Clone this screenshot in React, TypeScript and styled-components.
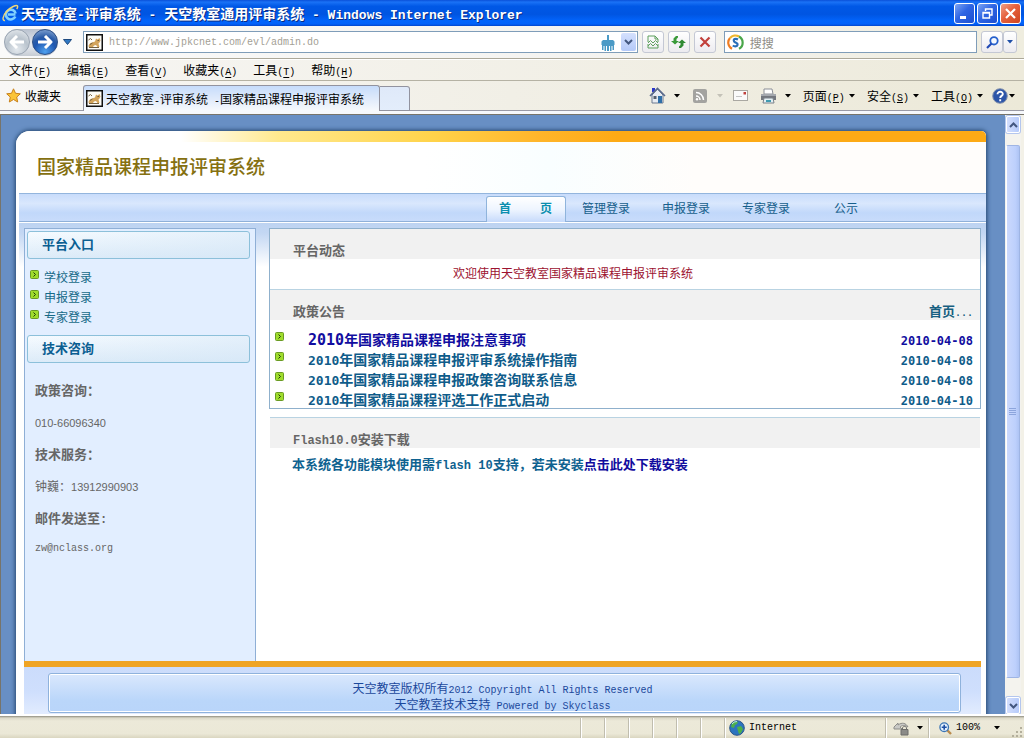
import React from "react";
import styled, { createGlobalStyle, css } from "styled-components";

const GlobalStyle = createGlobalStyle`
  * { box-sizing: border-box; }
  html, body { margin: 0; padding: 0; }
  body {
    font-family: "Noto Sans CJK SC", sans-serif;
    font-size: 12px;
    line-height: 16px;
    color: #000;
    background: #ece9d8;
  }
  button, input { font: inherit; color: inherit; padding: 0; margin: 0; border: 0; background: none; }
  a { color: inherit; text-decoration: none; }
  h1, h2, p, ul { margin: 0; padding: 0; font-size: inherit; font-weight: inherit; }
  ul { list-style: none; }
`;

/* ---------- mixed Chinese / Latin text ---------- */

const Latin = styled.span<{ $size: number; $face: string }>`
  font-family: "${(p) => p.$face}", monospace;
  font-size: ${(p) => p.$size}px;
  line-height: 1;
  white-space: pre;
`;

type MixProps = { children: string; size?: number; face?: string };

function Mix({ children, size = 10, face = "Liberation Mono" }: MixProps) {
  const parts = children.split(/([\x20-\x7e]+)/).filter(Boolean);
  return (
    <>
      {parts.map((part, i) =>
        /^[\x20-\x7e]/.test(part) ? (
          <Latin key={i} $size={size} $face={face}>
            {part}
          </Latin>
        ) : (
          part
        )
      )}
    </>
  );
}

/* ---------- window frame ---------- */

const Window = styled.div`
  display: flex;
  flex-direction: column;
  height: 100vh;
  overflow: hidden;
  white-space: nowrap;
`;

const TitleBar = styled.header`
  display: flex;
  align-items: center;
  flex: none;
  height: 26px;
  padding: 0 3px 0 2px;
  gap: 2px;
  background: linear-gradient(#0a50d8 0, #1a72f6 8%, #0058e6 24%, #0055e2 55%, #0264fb 80%, #0262fa 92%, #0346cc 100%);
  color: #fff;
  font-weight: bold;
  font-size: 14px;
  text-shadow: 1px 1px 0 #0a2a80;
`;

const WindowTitle = styled.h1`
  flex: 1;
  font-size: 14px;
  line-height: 24px;
  font-weight: bold;
`;

const CaptionButton = styled.button<{ $close?: boolean }>`
  display: grid;
  place-items: center;
  width: 21px;
  height: 21px;
  border: 1px solid #fff;
  border-radius: 3px;
  background: ${(p) =>
    p.$close
      ? "linear-gradient(135deg, #f0a088, #e5603c 45%, #cf4420)"
      : "linear-gradient(135deg, #7ba4f4, #2f66e4 45%, #1c4fd0)"};
`;

const AddressRow = styled.div`
  display: flex;
  align-items: center;
  flex: none;
  height: 33px;
  padding: 0 7px 0 4px;
  background: linear-gradient(90deg, #fafafa 0, #f4f3f0 60%, #efeddf 100%);
  border-bottom: 1px solid #aca899;
`;

const NavPair = styled.div`
  display: flex;
  align-items: center;
  height: 27px;
  gap: 2px;
  border-radius: 14px;
  background: linear-gradient(#b9c2cf, #e8ebf0 60%, #c6ccd4);
`;

const RoundButton = styled.button<{ $active?: boolean }>`
  display: grid;
  place-items: center;
  width: 26px;
  height: 26px;
  border-radius: 13px;
  border: 1px solid ${(p) => (p.$active ? "#2b4e86" : "#98a3b1")};
  background: ${(p) =>
    p.$active
      ? "radial-gradient(circle at 50% 90%, #4fa0ee, #1f57b0 45%, #2a5ca8 60%, #9bb8de)"
      : "radial-gradient(circle at 50% 80%, #e4e9ee, #b9c3cd 50%, #eef1f4)"};
`;

const PlainButton = styled.button`
  display: grid;
  place-items: center;
`;

const HistoryButton = styled(PlainButton)`
  width: 12px;
  margin: 0 10px 0 3px;
`;

const Field = styled.label<{ $grow?: boolean }>`
  display: flex;
  align-items: center;
  ${(p) => (p.$grow ? css`flex: 1;` : css`flex: 0 0 25%;`)}
  height: 22px;
  padding: 0 1px 0 2px;
  gap: 6px;
  border: 1px solid #7f9db9;
  background: #fff;
  color: #a3a095;
`;

const FieldInput = styled.input<{ $mono?: boolean }>`
  flex: 1;
  min-width: 0;
  height: 18px;
  outline: 0;
  ${(p) => p.$mono && css`font-family: "Liberation Mono", monospace; font-size: 10px;`}
  &::placeholder { color: #8f8d86; opacity: 1; }
`;

const DropButton = styled(PlainButton)`
  width: 15px;
  height: 18px;
  border-radius: 2px;
  background: linear-gradient(#d4e0fd, #b4c9f8);
`;

const ToolButtons = styled.div`
  display: flex;
  gap: 4px;
  margin: 0 8px 0 4px;
`;

const ToolButton = styled.button<{ $narrow?: boolean }>`
  display: grid;
  place-items: center;
  width: ${(p) => (p.$narrow ? 14 : 22)}px;
  height: 22px;
  border: 1px solid #c4c8d4;
  border-radius: 3px;
  background: linear-gradient(#fff, #ecebf0);
`;

const SearchButtons = styled.div`
  display: flex;
  margin-left: 4px;
`;

const MenuBar = styled.nav`
  display: flex;
  align-items: center;
  flex: none;
  height: 22px;
  gap: 16px;
  padding: 0 9px;
  background: linear-gradient(90deg, #f7f6f4, #edeadb);
  border-top: 1px solid #fff;
  border-bottom: 1px solid #b5b2a4;
`;

const MenuButton = styled.button`
  u { text-underline-offset: 2px; }
`;

const TabStrip = styled.div`
  display: flex;
  flex: none;
  height: 30px;
  background: linear-gradient(90deg, #f8f7f5, #f1efe6 50%, #ece9d8);
`;

const FavoritesButton = styled.button`
  display: flex;
  align-items: center;
  width: 83px;
  gap: 4px;
  padding: 0 0 0 6px;
  border-bottom: 1px solid #9a9aa6;
`;

const Tab = styled.button`
  display: flex;
  align-items: center;
  gap: 3px;
  width: 297px;
  margin-top: 4px;
  padding: 0 0 0 2px;
  border: 1px solid #92939f;
  border-bottom: 0;
  border-radius: 3px 3px 0 0;
  background: linear-gradient(#c6dcfb, #dfeafb 50%, #f7f9fc);
`;

const NewTab = styled.button`
  width: 30px;
  margin-top: 5px;
  border: 1px solid #92939f;
  border-left: 0;
  border-radius: 0 3px 0 0;
  background: linear-gradient(#dfe9f9, #e3edfb);
`;

const CommandBar = styled.div`
  display: flex;
  flex: 1;
  align-items: center;
  justify-content: flex-end;
  padding: 0 9px 0 0;
  border-bottom: 1px solid #9a9aa6;
`;

const Command = styled.button<{ $gap: number; $inner?: number }>`
  display: flex;
  align-items: center;
  gap: ${(p) => p.$inner ?? 4}px;
  margin-left: ${(p) => p.$gap}px;
`;

const TabShelf = styled.div`
  flex: none;
  height: 4px;
  background: #f6f8fb;
  border-bottom: 1px solid #77746a;
`;

/* ---------- web page ---------- */

const Viewport = styled.div`
  display: flex;
  flex: 1;
  min-height: 0;
  border-left: 1px solid #77746a;
  border-right: 3px solid #f3f1e8;
`;

const Canvas = styled.div`
  flex: 1;
  min-width: 0;
  overflow: hidden;
  padding: 16px 19px 0 15px;
  background: #688fc4;
`;

const Sheet = styled.div`
  padding-left: 3px;
  border-radius: 14px 5px 0 0;
  background: #fff;
  box-shadow: 0 0 4px 1px #24466f;
  overflow: hidden;
`;

const Banner = styled.div`
  margin-left: -3px;
  padding: 23px 21px 16px;
  background:
    linear-gradient(90deg, transparent 17%, #ffe98e 27%, #ffd34a 43%, #ffb52a 54%, #fdaa15 62%) 0 0 / 100% 11px no-repeat,
    linear-gradient(90deg, #fff 42%, #f9feff 55%, #fffdfb 70%);
`;

const SiteTitle = styled.h2`
  font-size: 19px;
  line-height: 23px;
  font-weight: 500;
  color: #857010;
`;

const SiteNav = styled.nav`
  display: flex;
  height: 29px;
  padding-left: 467px;
  border-top: 1px solid #93b5dd;
  border-bottom: 1px solid #8fb0d8;
  background: linear-gradient(#c8dcfb, #d9e7fd 35%, #c1d8fa 70%, #c8dcfb);
`;

const NavLink = styled.a<{ $active?: boolean }>`
  display: block;
  width: 80px;
  text-align: center;
  line-height: 24px;
  padding-top: 2px;
  color: #175f8c;
  ${(p) =>
    p.$active &&
    css`
      display: flex;
      justify-content: space-between;
      margin-top: 2px;
      margin-bottom: -1px;
      padding: 0 13px 0 12px;
      line-height: 22px;
      font-weight: bold;
      color: #0c8fae;
      border: 1px solid #8fb4dc;
      border-bottom: 0;
      border-radius: 3px 3px 0 0;
      background: linear-gradient(#fff, #eef5ff 50%, #c6dafb);
    `}
`;

const Columns = styled.div`
  display: flex;
  align-items: flex-start;
  gap: 13px;
  padding: 5px 5px 0;
  border-top: 1px solid #fff;
  background: linear-gradient(#bdd3f1 0, #c3d7f3 10px, #fff 44px);
`;

const Sidebar = styled.aside`
  flex: none;
  width: 232px;
  height: 433px;
  padding: 2px;
  border: 1px solid #8fafd6;
  border-bottom: 0;
  background: #e2eeff;
`;

const SideHeading = styled.h2`
  width: 223px;
  height: 28px;
  padding-left: 14px;
  border: 1px solid #8cc0da;
  border-radius: 3px;
  background: linear-gradient(90deg, #ffffff00, #d4e6f788), linear-gradient(#f6fbff, #dcebf8);
  font-size: 13px;
  line-height: 24px;
  font-weight: bold;
  color: #0b5f92;
`;

const EntryList = styled.ul`
  padding: 8px 0 8px 3px;
`;

const Entry = styled.li`
  display: flex;
  align-items: flex-start;
  gap: 5px;
  height: 20px;
  line-height: 20px;
  color: #176a88;
  svg { margin-top: 3px; }
`;

const Contact = styled.div`
  padding: 11px 8px;
  line-height: 32px;
  color: #666;
  p:last-child { line-height: 24px; }
`;

const ContactLabel = styled.p`
  font-size: 13px;
  font-weight: bold;
`;

const Main = styled.main`
  flex: 1;
  min-width: 0;
  background: #fff;
`;

const Panel = styled.section`
  border: 1px solid #8fb0cc;
  margin-bottom: 8px;
`;

const PanelHead = styled.div<{ $line?: boolean }>`
  display: flex;
  justify-content: space-between;
  height: 30px;
  padding: 12px 7px 0 23px;
  ${(p) => p.$line && css`border-top: 1px solid #b9d3e2; height: 31px;`}
  background: #f1f1f1;
  font-size: 13px;
  line-height: 18px;
  font-weight: bold;
  color: #666;
  a { color: #175f80; }
`;

const Welcome = styled.p`
  padding: 6px 104px 8px 0;
  text-align: center;
  color: #9c1230;
`;

const NoticeTable = styled.table`
  width: 100%;
  margin-top: 10px;
  border-collapse: collapse;
  font-weight: bold;
  color: #0f5c8a;
  td { height: 20px; padding: 0; font-size: 14px; line-height: 18px; vertical-align: top; }
  td:first-child { width: 38px; padding: 2px 0 0 5px; line-height: 0; }
  td:last-child { padding-right: 7px; text-align: right; }
  tr:first-child { color: #110da0; }
  tr:last-child td { height: 18px; }
`;

const Download = styled.section`
  margin: 0 1px;
`;

const DownloadText = styled.p`
  padding: 7px 0 0 22px;
  font-size: 13px;
  line-height: 18px;
  font-weight: bold;
  color: #0f6290;
  a { color: #100c9e; }
`;

const Footer = styled.footer`
  margin: 0 5px;
  padding: 6px 20px 16px 24px;
  border-top: 6px solid #efa424;
  background: linear-gradient(#cbdcfb, #cfdffd 40%, #eef4ff 100%);
`;

const FooterBox = styled.div`
  height: 40px;
  padding: 6px 0 0;
  border: 1px solid #8fb2dc;
  border-radius: 3px;
  box-shadow: inset 0 0 0 1px #fff;
  background: linear-gradient(#dae8fd, #bad6fa 70%, #b9d5fa);
  text-align: center;
  color: #1b489c;
`;

const FooterLine = styled.p`
  line-height: 16px;
  padding-right: 4px;
`;

/* ---------- scroll bar and status bar ---------- */

const ScrollBar = styled.div`
  display: flex;
  flex-direction: column;
  flex: none;
  width: 16px;
  padding: 1px 1px 0;
  background: #f4f3ee;
`;

const ScrollButton = styled.button`
  display: grid;
  place-items: center;
  flex: none;
  height: 17px;
  border: 1px solid #fff;
  border-radius: 2px;
  background: linear-gradient(90deg, #d3defd, #b6cbfa);
  box-shadow: 0 0 0 1px #b4c6ee;
`;

const ScrollTrack = styled.div`
  display: flex;
  flex: 1;
  padding: 12px 0 19px;
`;

const ScrollThumb = styled.div`
  display: grid;
  place-items: center;
  flex: 1;
  border: 1px solid #9fb5e4;
  border-left-color: #fff;
  border-radius: 2px;
  background: linear-gradient(90deg, #cbd9fd, #bdd0fc 70%, #aec4f4);
`;

const StatusBar = styled.footer`
  display: flex;
  flex: none;
  height: 24px;
  padding-top: 2px;
  justify-content: flex-end;
  border-top: 2px solid #fff;
  background: linear-gradient(#8f8d80 0, #dcd9c8 2px, #ece9d9 5px, #ebe8d7 80%, #dad6c0);
`;

const StatusCell = styled.div<{ $width: number }>`
  display: flex;
  align-items: center;
  width: ${(p) => p.$width}px;
  padding-left: 4px;
  gap: 4px;
  border-left: 1px solid #c0bdae;
  box-shadow: inset 1px 0 0 #fff;
`;

const StatusButton = styled.button<{ $gap: number; $pad: number }>`
  display: flex;
  align-items: center;
  gap: ${(p) => p.$gap}px;
  padding-left: ${(p) => p.$pad}px;
`;

const Grip = styled.svg`
  margin-left: auto;
  align-self: flex-end;
`;

/* ---------- icons ---------- */

const Caret = ({ color = "#000" }: { color?: string }) => (
  <svg width="6" height="4" viewBox="0 0 6 4">
    <path d="M0 0h6L3 3.4z" fill={color} />
  </svg>
);

const Chevron = ({ up }: { up?: boolean }) => (
  <svg width="9" height="6" viewBox="0 0 9 6">
    <path d={up ? "M1 5l3.500-3.500L8 5" : "M1 1l3.500 3.500L8 1"} fill="none" stroke="#43577f" strokeWidth="2" />
  </svg>
);

const IeLogo = () => (
  <svg width="17" height="18" viewBox="0 0 17 18">
    <path d="M13.500 10.500H6M13.300 12.500A4.900 4.900 0 1 1 13.600 9.500" fill="none" stroke="#7fd0ff" strokeWidth="2.600" />
    <path d="M3 16.500C0 17 .5 12 4.500 7.500S14.500.5 15.500 2c.5 1-.2 2.200-.8 3" fill="none" stroke="#f0d878" strokeWidth="1.400" />
  </svg>
);

const Arrow = ({ left }: { left?: boolean }) => (
  <svg width="16" height="14" viewBox="0 0 16 14">
    <path
      d={left ? "M8 1L2 7l6 6M2.500 7H15" : "M8 1l6 6-6 6M13.500 7H1"}
      fill="none"
      stroke="#fff"
      strokeWidth="3"
      strokeLinejoin="round"
    />
  </svg>
);

const SiteIcon = () => (
  <svg width="17" height="17" viewBox="0 0 17 17">
    <rect x=".75" y=".75" width="15.500" height="15.500" fill="#fdfcf7" stroke="#111" strokeWidth="1.500" />
    <path d="M2.500 12.500c0-2 1.500-3.500 3.500-4l3-1 1-3 1.500 1L13.500 4l1 2.500-1 2-1 1 1 3.500h-2l-1.500-2-2 .5L7 13H3z" fill="#d3a45c" />
    <path d="M2.500 6l2-1.500L6 6M4 10.500L6.500 9M11.500 6.500h1.500M3 13.500h10" fill="none" stroke="#75603f" />
  </svg>
);

const BrushIcon = () => (
  <svg width="14" height="17" viewBox="0 0 14 17">
    <path d="M6 1h2v5h4l1.500 1.500V11H13v5h-1.500v-4h-1v5H9v-5H8v5H6v-5H5v5H3.500v-5h-1v4H1v-5H.5V7.500L2 6h4z" fill="#4b9ac6" />
  </svg>
);

const PageIcon = () => (
  <svg width="12" height="14" viewBox="0 0 12 14">
    <path d="M1 7V1h7l3 3v3M1 9v4h10V9M8 1v3h3" fill="none" stroke="#5ea05e" />
    <path d="M1 8l2.500-2.500L6 8l2.500-2.500L11 8M1 11l2.500-2.500L6 11l2.500-2.500L11 11" fill="none" stroke="#5ea05e" />
  </svg>
);

const RefreshIcon = () => (
  <svg width="15" height="14" viewBox="0 0 15 14">
    <path d="M7 1v1.500L5.500 4v2H8L4 9.500 0 6h2.500V3.500L5 1z" fill="#3a9a3a" />
    <path d="M8 13v-1.500L9.500 10V8H7l4-3.500L15 8h-2.500v2.500L10 13z" fill="#2f8a34" />
  </svg>
);

const StopIcon = () => (
  <svg width="12" height="12" viewBox="0 0 12 12">
    <path d="M1.500 1.500l9 9M10.500 1.500l-9 9" stroke="#c2403c" strokeWidth="2.200" />
  </svg>
);

const SosoIcon = () => (
  <svg width="17" height="17" viewBox="0 0 17 17">
    <path d="M5 14.800A7 7 0 0 1 3 4" fill="none" stroke="#ef7d22" strokeWidth="2.200" />
    <path d="M3 4a7 7 0 0 1 9-1.500" fill="none" stroke="#f0b62c" strokeWidth="2.200" />
    <path d="M12 2.500a7 7 0 0 1 0 12.300" fill="none" stroke="#4aa64a" strokeWidth="2.200" />
    <path d="M11 5.500C8.500 4 6 5.200 7 7.200s4 1.200 3.600 3.500S7 12.500 5.800 11.500" fill="none" stroke="#2a6fb8" strokeWidth="2.200" />
  </svg>
);

const SearchIcon = () => (
  <svg width="13" height="13" viewBox="0 0 13 13">
    <circle cx="8" cy="4.800" r="3.700" fill="#f4f9ff" stroke="#2660cc" strokeWidth="1.800" />
    <path d="M5.500 7.500L1 12" stroke="#2048b4" strokeWidth="2.200" />
  </svg>
);

const StarIcon = () => (
  <svg width="15" height="15" viewBox="0 0 15 15">
    <path d="M7.500.8l2 4.500 4.800.5-3.600 3.300 1 4.900-4.200-2.500L3.300 14l1-4.900L.7 5.800l4.800-.5z" fill="#fbc437" stroke="#c8811c" />
  </svg>
);

const HomeIcon = () => (
  <svg width="17" height="17" viewBox="0 0 17 17">
    <path d="M3 1h3v4H3z" fill="#2b36c8" />
    <path d="M3 8l5.500-6L14 8v8H3z" fill="#e8ecf2" stroke="#6d7a90" />
    <path d="M1 9l7.500-7.500L16 9" fill="none" stroke="#5b6b8c" strokeWidth="1.600" />
    <path d="M9 9h4v7H9z" fill="#2f6fa8" />
    <path d="M4.500 9h3v3h-3z" fill="#555f6e" />
  </svg>
);

const RssIcon = () => (
  <svg width="14" height="14" viewBox="0 0 14 14">
    <rect width="14" height="14" rx="2" fill="#a3a3a0" />
    <path d="M3 7a4 4 0 0 1 4 4M3 3.500A7.500 7.500 0 0 1 10.500 11" fill="none" stroke="#fff" strokeWidth="1.500" />
    <circle cx="4" cy="10.200" r="1.200" fill="#fff" />
  </svg>
);

const MailIcon = () => (
  <svg width="15" height="11" viewBox="0 0 15 11">
    <rect x=".5" y=".5" width="14" height="10" fill="#fafafa" stroke="#aaa8a2" />
    <path d="M10.500 2h2.500v2.500h-2.500z" fill="#c0403c" />
    <path d="M3 6.500h6" stroke="#c4c4c4" />
  </svg>
);

const PrinterIcon = () => (
  <svg width="17" height="16" viewBox="0 0 17 16">
    <path d="M4 1h8l1 5H4z" fill="#fff" stroke="#8b8f96" />
    <path d="M1 6h15v6H1z" fill="#73777e" />
    <path d="M1 6h15v2H1z" fill="#a4a8ae" />
    <path d="M4 10h9l1 5H3z" fill="#e4f0f4" stroke="#7d828a" />
    <path d="M6 12h5v2H6z" fill="#3f9ab0" />
  </svg>
);

const HelpIcon = () => (
  <svg width="16" height="16" viewBox="0 0 16 16">
    <circle cx="8" cy="8" r="7.300" fill="#2c55a8" stroke="#8794ac" />
    <path d="M5.500 6.300C5.500 2.800 11 3 10.800 6.200 10.600 8 8.200 7.800 8.200 10M8.200 11.200v2" fill="none" stroke="#fff" strokeWidth="1.900" />
  </svg>
);

const Bullet = () => (
  <svg width="9" height="9" viewBox="0 0 9 9">
    <rect x=".5" y=".5" width="8" height="8" rx="1" fill="#9fdc2c" stroke="#6a9a24" />
    <path d="M3.500 2.500l2 2-2 2" fill="none" stroke="#1d3a08" />
  </svg>
);

const GlobeIcon = () => (
  <svg width="16" height="16" viewBox="0 0 16 16">
    <circle cx="8" cy="8" r="7.300" fill="#2c74bf" stroke="#2a5588" />
    <path d="M3 3c2-2 5-2 6-1L8 4 6 5 5 8 2 7zM8 7l4-1 2 3-2 4-2 1-1-3z" fill="#4fb04a" />
    <path d="M3 4a6 6 0 0 1 5-2.500" fill="none" stroke="#b9e4f6" />
  </svg>
);

const LockIcon = () => (
  <svg width="18" height="16" viewBox="0 0 18 16">
    <path d="M1 7l4-4v2c4-3 8-2 10 2-3-2-6-2-8 0l2 2H1z" fill="#c9c9c6" stroke="#8d8d8a" />
    <path d="M8 9.500h7V15H8z" fill="#8b8b88" stroke="#6c6c6a" />
    <path d="M9.500 9.500V8c0-2 4-2 4 0v1.500" fill="none" stroke="#6c6c6a" />
  </svg>
);

const ZoomIcon = () => (
  <svg width="13" height="13" viewBox="0 0 13 13">
    <path d="M8 8l4 4" stroke="#b98a4c" strokeWidth="2.400" />
    <circle cx="5.200" cy="5.200" r="4.300" fill="#e4f1fd" stroke="#3a74b4" strokeWidth="1.300" />
    <path d="M5.200 2.700v5M2.700 5.200h5" stroke="#1f50a4" strokeWidth="1.600" />
  </svg>
);

/* ---------- data ---------- */

const menus: [string, string][] = [
  ["文件", "F"],
  ["编辑", "E"],
  ["查看", "V"],
  ["收藏夹", "A"],
  ["工具", "T"],
  ["帮助", "H"],
];

const commands: [string, string, number][] = [
  ["页面", "P", 12],
  ["安全", "S", 12],
  ["工具", "O", 12],
];

const entries = ["学校登录", "申报登录", "专家登录"];

const notices = [
  { title: "2010年国家精品课程申报注意事项", date: "2010-04-08", size: 15 },
  { title: "2010年国家精品课程申报评审系统操作指南", date: "2010-04-08", size: 13 },
  { title: "2010年国家精品课程申报政策咨询联系信息", date: "2010-04-08", size: 13 },
  { title: "2010年国家精品课程评选工作正式启动", date: "2010-04-10", size: 13 },
];

const AccessLabel = ({ text, letter }: { text: string; letter: string }) => (
  <span>
    {text}
    <Latin $size={10} $face="Liberation Mono">
      (<u>{letter}</u>)
    </Latin>
  </span>
);

export default function App() {
  return (
    <Window>
      <GlobalStyle />
      <TitleBar>
        <IeLogo />
        <WindowTitle>
          <Mix size={13}>天空教室-评审系统 - 天空教室通用评审系统 - Windows Internet Explorer</Mix>
        </WindowTitle>
        <CaptionButton aria-label="最小化">
          <svg width="13" height="13" viewBox="0 0 13 13">
            <path d="M2 9h6v3H2z" fill="#fff" />
          </svg>
        </CaptionButton>
        <CaptionButton aria-label="还原">
          <svg width="13" height="13" viewBox="0 0 13 13">
            <path d="M4.500 4V2H11v6H9M4 2h7.500M2 5.500h6.500V11H2zM2 6h6.500" fill="none" stroke="#fff" strokeWidth="1.400" />
          </svg>
        </CaptionButton>
        <CaptionButton $close aria-label="关闭">
          <svg width="13" height="13" viewBox="0 0 13 13">
            <path d="M2 2l9 9M11 2l-9 9" stroke="#fff" strokeWidth="2.200" />
          </svg>
        </CaptionButton>
      </TitleBar>

      <AddressRow>
        <NavPair>
          <RoundButton aria-label="后退">
            <Arrow left />
          </RoundButton>
          <RoundButton $active aria-label="前进">
            <Arrow />
          </RoundButton>
        </NavPair>
        <HistoryButton aria-label="历史">
          <svg width="9" height="6" viewBox="0 0 9 6">
            <path d="M.5.5h8L4.500 5.500z" fill="#2f78c4" stroke="#1f4a80" />
          </svg>
        </HistoryButton>
        <Field $grow>
          <SiteIcon />
          <FieldInput $mono aria-label="地址" defaultValue="http://www.jpkcnet.com/evl/admin.do" />
          <BrushIcon />
          <DropButton aria-label="展开地址">
            <Chevron />
          </DropButton>
        </Field>
        <ToolButtons>
          <ToolButton aria-label="兼容性视图">
            <PageIcon />
          </ToolButton>
          <ToolButton aria-label="刷新">
            <RefreshIcon />
          </ToolButton>
          <ToolButton aria-label="停止">
            <StopIcon />
          </ToolButton>
        </ToolButtons>
        <Field>
          <SosoIcon />
          <FieldInput aria-label="搜索" placeholder="搜搜" />
        </Field>
        <SearchButtons>
          <ToolButton aria-label="搜索">
            <SearchIcon />
          </ToolButton>
          <ToolButton $narrow aria-label="搜索选项">
            <Caret color="#1f4fa8" />
          </ToolButton>
        </SearchButtons>
      </AddressRow>

      <MenuBar>
        {menus.map(([text, letter]) => (
          <MenuButton key={letter}>
            <AccessLabel text={text} letter={letter} />
          </MenuButton>
        ))}
      </MenuBar>

      <TabStrip>
        <FavoritesButton>
          <StarIcon />
          收藏夹
        </FavoritesButton>
        <Tab>
          <SiteIcon />
          <span>
            <Mix>天空教室-评审系统 -国家精品课程申报评审系统</Mix>
          </span>
        </Tab>
        <NewTab aria-label="新选项卡" />
        <CommandBar>
          <Command $gap={0} $inner={8} aria-label="主页">
            <HomeIcon />
            <Caret />
          </Command>
          <Command $gap={13} $inner={10} aria-label="源">
            <RssIcon />
            <Caret color="#c4c2b8" />
          </Command>
          <Command $gap={10} aria-label="阅读邮件">
            <MailIcon />
          </Command>
          <Command $gap={12} $inner={8} aria-label="打印">
            <PrinterIcon />
            <Caret />
          </Command>
          {commands.map(([text, letter, gap]) => (
            <Command key={letter} $gap={gap}>
              <AccessLabel text={text} letter={letter} />
              <Caret />
            </Command>
          ))}
          <Command $gap={9} $inner={1} aria-label="帮助">
            <HelpIcon />
            <Caret />
          </Command>
        </CommandBar>
      </TabStrip>
      <TabShelf />

      <Viewport>
        <Canvas>
          <Sheet>
            <Banner>
              <SiteTitle>国家精品课程申报评审系统</SiteTitle>
            </Banner>
            <SiteNav>
              <NavLink href="#" $active>
                <span>首</span>
                <span>页</span>
              </NavLink>
              <NavLink href="#">管理登录</NavLink>
              <NavLink href="#">申报登录</NavLink>
              <NavLink href="#">专家登录</NavLink>
              <NavLink href="#">公示</NavLink>
            </SiteNav>

            <Columns>
              <Sidebar>
                <SideHeading>平台入口</SideHeading>
                <EntryList>
                  {entries.map((name) => (
                    <Entry key={name}>
                      <Bullet />
                      <a href="#">{name}</a>
                    </Entry>
                  ))}
                </EntryList>
                <SideHeading>技术咨询</SideHeading>
                <Contact>
                  <ContactLabel>政策咨询：</ContactLabel>
                  <p>
                    <Mix size={11} face="Liberation Sans">010-66096340</Mix>
                  </p>
                  <ContactLabel>技术服务：</ContactLabel>
                  <p>
                    <Mix size={11} face="Liberation Sans">钟巍：13912990903</Mix>
                  </p>
                  <ContactLabel>
                    <Mix size={12}>邮件发送至:</Mix>
                  </ContactLabel>
                  <p>
                    <Mix>zw@nclass.org</Mix>
                  </p>
                </Contact>
              </Sidebar>

              <Main>
                <Panel>
                  <PanelHead>
                    <h2>平台动态</h2>
                  </PanelHead>
                  <Welcome>欢迎使用天空教室国家精品课程申报评审系统</Welcome>
                  <PanelHead $line>
                    <h2>政策公告</h2>
                    <a href="#">
                      <Mix>首页...</Mix>
                    </a>
                  </PanelHead>
                  <NoticeTable>
                    <tbody>
                      {notices.map((n) => (
                        <tr key={n.title}>
                          <td>
                            <Bullet />
                          </td>
                          <td>
                            <a href="#">
                              <Mix size={n.size} face="DejaVu Sans Mono">{n.title}</Mix>
                            </a>
                          </td>
                          <td>
                            <Mix size={12} face="DejaVu Sans Mono">{n.date}</Mix>
                          </td>
                        </tr>
                      ))}
                    </tbody>
                  </NoticeTable>
                </Panel>
                <Download>
                  <PanelHead $line>
                    <h2>
                      <Mix size={12}>Flash10.0安装下载</Mix>
                    </h2>
                  </PanelHead>
                  <DownloadText>
                    <Mix size={12}>本系统各功能模块使用需flash 10支持，若未安装</Mix>
                    <a href="#">点击此处下载安装</a>
                  </DownloadText>
                </Download>
              </Main>
            </Columns>

            <Footer>
              <FooterBox>
                <FooterLine>
                  <Mix>天空教室版权所有2012 Copyright All Rights Reserved</Mix>
                </FooterLine>
                <FooterLine>
                  <Mix>天空教室技术支持 Powered by Skyclass</Mix>
                </FooterLine>
              </FooterBox>
            </Footer>
          </Sheet>
        </Canvas>
        <ScrollBar>
          <ScrollButton aria-label="向上滚动">
            <Chevron up />
          </ScrollButton>
          <ScrollTrack>
            <ScrollThumb>
              <svg width="8" height="8" viewBox="0 0 8 8">
                <path d="M0 .5h7M0 2.500h7M0 4.500h7M0 6.500h7" stroke="#8ca5dc" />
              </svg>
            </ScrollThumb>
          </ScrollTrack>
          <ScrollButton aria-label="向下滚动">
            <Chevron />
          </ScrollButton>
        </ScrollBar>
      </Viewport>

      <StatusBar>
        {[0, 1, 2, 3, 4, 5].map((i) => (
          <StatusCell key={i} $width={24} />
        ))}
        <StatusCell $width={161}>
          <GlobeIcon />
          <Mix>Internet</Mix>
        </StatusCell>
        <StatusCell $width={43}>
          <StatusButton $gap={6} $pad={3} aria-label="保护模式">
            <LockIcon />
            <Caret />
          </StatusButton>
        </StatusCell>
        <StatusCell $width={96}>
          <StatusButton $gap={4} $pad={6} aria-label="缩放">
            <ZoomIcon />
            <Mix>100%</Mix>
          </StatusButton>
          <StatusButton $gap={0} $pad={10} aria-label="缩放级别">
            <Caret />
          </StatusButton>
          <Grip width="12" height="12" viewBox="0 0 12 12">
            <path d="M8 1h2v2H8zM8 5h2v2H8zM4 5h2v2H4zM8 9h2v2H8zM4 9h2v2H4zM0 9h2v2H0z" fill="#b3af9c" />
          </Grip>
        </StatusCell>
      </StatusBar>
    </Window>
  );
}
